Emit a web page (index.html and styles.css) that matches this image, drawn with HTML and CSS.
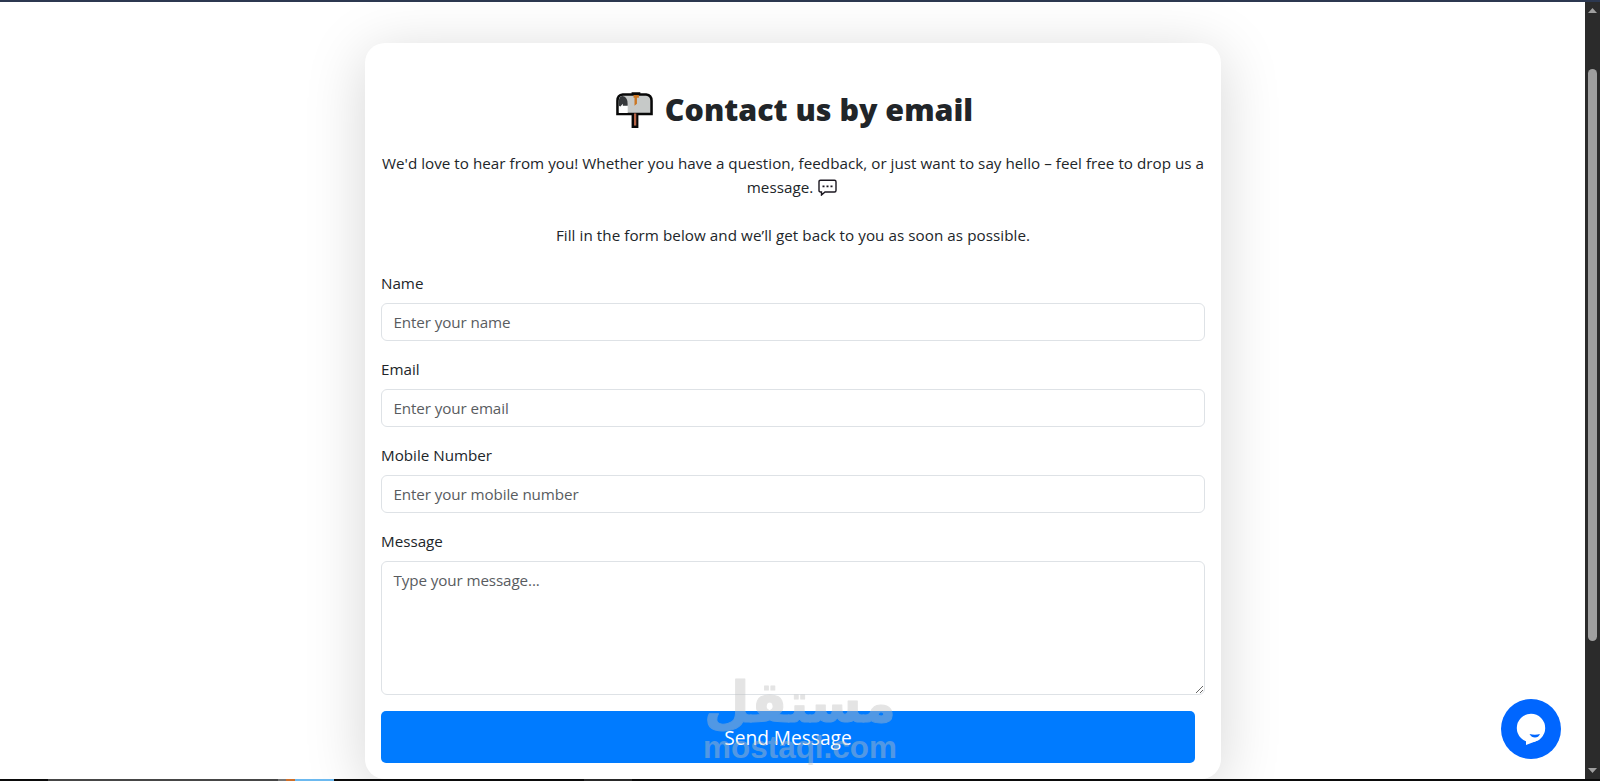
FILE: index.html
```html
<!DOCTYPE html>
<html lang="en">
<head>
<meta charset="utf-8">
<title>Contact us</title>
<link rel="stylesheet" href="styles.css">
</head>
<body>
<div class="topline"></div>
<div class="viewport">
  <main class="page">
    <section class="card">
      <h1 class="title">
        <svg class="mailbox" viewBox="0 0 38 38">
          <path d="M7 2.500H31Q36.500 3 36.500 9V22.500H1.500V9Q1.500 3 7 2.500Z" fill="#c6c9c8" stroke="#080808" stroke-width="2.600"/>
          <path d="M3 21.500V9Q3 4 7 4Q12 5 12 12V21.500H3Z" fill="#fff"/>
          <path d="M3 14V9Q3 4 7 4Q12 5 12 12V14H7V12L4.500 15Z" fill="#35383b"/>
          <path d="M16 1.500H25" stroke="#080808" stroke-width="2.500"/>
          <path d="M18 3H23.500V6H21.500V12L19 14V6H18Z" fill="#cb7622"/>
          <path d="M16 22H23V37H16Z" fill="#080808"/>
          <path d="M18.500 22H20.800V34.500H18.500Z" fill="#b66346"/>
        </svg>
        <span class="title-text">Contact us by email</span>
      </h1>
      <div class="intro">
        <p class="line line-a">We'd love to hear from you! Whether you have a question, feedback, or just want to say hello – feel free to drop us a</p>
        <p class="line line-b"><span>message.</span>
          <svg class="bubble" viewBox="0 0 19 17"><path d="M2.500 1.200H16.500Q18 1.200 18 2.700V11.500Q18 13 16.500 13H7L3.500 16V13H2.500Q1 13 1 11.500V2.700Q1 1.200 2.500 1.200Z" fill="#fff" stroke="#1b1720" stroke-width="1.400"/><path d="M4.500 6.500h2v1.800h-2zM8.500 6.500h2v1.800h-2zM12.500 6.500h2v1.800h-2z" fill="#1b1720"/></svg>
        </p>
        <p class="line line-c">Fill in the form below and we’ll get back to you as soon as possible.</p>
      </div>
      <form class="form">
        <label class="label" for="name">Name</label>
        <input class="control" id="name" placeholder="Enter your name">
        <label class="label" for="email">Email</label>
        <input class="control" id="email" placeholder="Enter your email">
        <label class="label" for="mobile">Mobile Number</label>
        <input class="control" id="mobile" placeholder="Enter your mobile number">
        <label class="label" for="message">Message</label>
        <textarea class="control area" id="message" placeholder="Type your message..."></textarea>
        <button class="send" type="button">Send Message</button>
      </form>
    </section>
    <svg class="watermark" viewBox="0 0 200 110">
      <text class="wm-ar" x="4" y="52" textLength="192" lengthAdjust="spacingAndGlyphs" direction="ltr">مستقل</text>
      <text class="wm-en" x="3" y="88" textLength="194" lengthAdjust="spacingAndGlyphs">mostaql.com</text>
    </svg>
    <div class="chat">
      <svg viewBox="0 0 60 60"><circle cx="30" cy="29" r="14.200" fill="#fff"/><path d="M25 41V46L38 41L42 36Z" fill="#fff"/><path d="M28.500 35Q34 36.500 39 35Q37.500 38.500 34 38.500Q30.500 38.500 28.500 35Z" fill="#0066ff"/></svg>
    </div>
  </main>
  <div class="scrollbar">
    <svg class="arrow" viewBox="0 0 9 5"><path d="M0 5L4.500 0L9 5Z"/></svg>
    <div class="thumb"></div>
    <svg class="arrow" viewBox="0 0 9 5"><path d="M0 0L4.500 5L9 0Z"/></svg>
  </div>
</div>
<div class="taskbar"><i class="task-window"></i><i class="task-image"></i><i class="task-gap"></i><i class="task-item"></i></div>
</body>
</html>
```

FILE: styles.css
```css
* { box-sizing: border-box; }
body {
  margin: 0;
  height: 781px;
  overflow: hidden;
  display: flex;
  flex-direction: column;
  background: #fff;
  color: #212529;
  font: 15.2px/24px "Open Sans", "Noto Sans", sans-serif;
}
.topline { height: 2px; background: #2c3850; flex: none; }
.viewport { height: 777px; display: flex; overflow: hidden; }
.page { position: relative; width: 1585px; padding-top: 41px; overflow: hidden; }
.card {
  width: 856px;
  height: 736px;
  margin: 0 364px 0 365px;
  padding: 48px 16px 16px;
  border-radius: 20px;
  background: #fff;
  box-shadow: 0 10px 60px rgba(0, 0, 0, .17);
}
.title {
  display: flex;
  justify-content: center;
  align-items: center;
  gap: 12px;
  height: 38px;
  margin: 0 0 22px;
  padding-left: 3px;
  font-size: 30.4px;
  font-weight: 800;
  white-space: nowrap;
}
.mailbox { width: 37px; height: 37px; }
.line { margin: 0; height: 24px; display: flex; justify-content: center; align-items: center; white-space: nowrap; letter-spacing: .03px; }
.line-b { gap: 5px; padding-right: 2px; }
.line-c { margin: 24px 0; letter-spacing: .06px; }
.bubble { width: 19px; height: 17px; }
.form { display: flex; flex-direction: column; align-items: stretch; }
.label { height: 24px; margin-bottom: 8px; }
.control {
  width: 100%;
  height: 38px;
  margin: 0 0 16px;
  padding: 6px 11.5px;
  border: 1px solid #dee2e6;
  border-radius: 6px;
  background: #fff;
  font: inherit;
  letter-spacing: -.1px;
}
.control::placeholder { color: #595c5f; opacity: 1; }
.area { height: 134px; resize: vertical; }
.send {
  width: 814px;
  height: 52px;
  padding: 2px 0 0;
  border: 0;
  border-radius: 5px;
  background: #007bff;
  color: #fff;
  font: 19.1px/30px "Open Sans", sans-serif;
}
.watermark { position: absolute; left: 700px; top: 668px; width: 200px; height: 110px; opacity: .42; fill: #c0c0c0; overflow: visible; }
.wm-ar { font: bold 56px "DejaVu Sans", sans-serif; stroke: #c0c0c0; stroke-width: 1px; stroke-linejoin: round; }
.wm-en { font: bold 32px "Liberation Sans", sans-serif; }
.chat { position: absolute; left: 1501px; top: 697px; width: 60px; height: 60px; border-radius: 50%; background: #0066ff; }
.chat svg { display: block; }
.scrollbar { width: 15px; background: #2b2b2b; padding: 6px 3px 6px; display: flex; flex-direction: column; align-items: center; justify-content: space-between; }
.arrow { width: 9px; height: 5px; fill: #a0a0a0; }
.thumb { width: 9px; height: 572px; border-radius: 5px; background: #9f9f9f; margin-bottom: 71px; }
.taskbar { display: flex; height: 2px; background: #0b0b0b; }
.task-window { width: 230px; margin-left: 48px; background: #464646; }
.task-image { width: 56px; background: linear-gradient(90deg, #777 0 14%, #d0702a 14% 30%, #6cb9ef 30%); }
.task-gap { width: 250px; }
.task-item { width: 48px; background: #292929; }
```
